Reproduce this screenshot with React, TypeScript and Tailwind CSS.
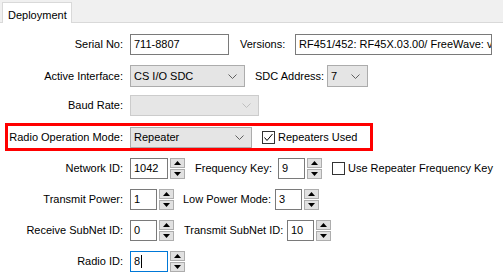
import React from 'react';

function TextBox({ value, w, focused = false }: { value: string; w: string; focused?: boolean }) {
  return (
    <div
      className={`${w} h-full bg-white border flex items-center pl-[3px] whitespace-nowrap overflow-hidden ${
        focused ? 'border-[#0078d7]' : 'border-[#7a7a7a]'
      }`}
    >
      <span>{value}</span>
      {focused && <span className="w-px h-[13px] bg-black ml-px"></span>}
    </div>
  );
}

function Spinner() {
  return (
    <div className="ml-[2px] flex flex-col gap-px h-full w-[15px]">
      <div className="flex-1 bg-[#e1e1e1] border border-[#adadad] flex items-center justify-center">
        <svg width="7" height="4" viewBox="0 0 7 4">
          <polygon points="3.5,0 7,4 0,4" fill="#000" />
        </svg>
      </div>
      <div className="flex-1 bg-[#e1e1e1] border border-[#adadad] flex items-center justify-center">
        <svg width="7" height="4" viewBox="0 0 7 4">
          <polygon points="0,0 7,0 3.5,4" fill="#000" />
        </svg>
      </div>
    </div>
  );
}

function Combo({ value, w, disabled = false }: { value: string; w: string; disabled?: boolean }) {
  return (
    <div
      className={`${w} h-full border flex items-center justify-between pl-[3px] pr-[7px] ${
        disabled ? 'bg-[#e6e6e6] border-[#cccccc]' : 'bg-[#e5e5e5] border-[#acacac]'
      }`}
    >
      <span>{value}</span>
      <svg width="9" height="5" viewBox="0 0 9 5">
        <polyline points="0.5,0.5 4.5,4.5 8.5,0.5" fill="none" stroke={disabled ? '#bfbfbf' : '#606060'} strokeWidth="1" />
      </svg>
    </div>
  );
}

function CheckBox({ checked }: { checked: boolean }) {
  return (
    <div className="w-[13px] h-[13px] border border-[#333333] bg-white flex items-center justify-center">
      {checked && (
        <svg width="11" height="11" viewBox="0 0 11 11">
          <polyline points="1.5,5.5 4,8.5 9.5,2" fill="none" stroke="#000" strokeWidth="1" />
        </svg>
      )}
    </div>
  );
}

function Label({ text }: { text: string }) {
  return <div className="w-[130px] pr-[7px] text-right whitespace-nowrap">{text}</div>;
}

export default function App() {
  return (
    <div className="w-[503px] h-[280px] bg-white overflow-hidden text-[11px] text-black font-['Liberation_Sans',Arial,sans-serif] flex flex-col">
      {/* Tab strip */}
      <div className="h-[23px] shrink-0 bg-[#f0f0f0] border-b border-[#d9d9d9] flex items-end">
        <div className="ml-[2px] w-[70px] h-[21px] -mb-px bg-white border border-b-0 border-[#d9d9d9] pl-[5px] pt-[4px]">
          Deployment
        </div>
      </div>

      {/* Serial No / Versions */}
      <div className="mt-[11px] h-[21px] flex items-center">
        <Label text="Serial No:" />
        <TextBox value="711-8807" w="w-[99px]" />
        <div className="w-[66px] pl-[11px]">Versions:</div>
        <TextBox value="RF451/452: RF45X.03.00/ FreeWave: v" w="w-[197px]" />
      </div>

      {/* Active Interface / SDC Address */}
      <div className="mt-[10px] h-[22px] flex items-center">
        <Label text="Active Interface:" />
        <Combo value="CS I/O SDC" w="w-[115px]" />
        <div className="w-[82px] pl-[10px]">SDC Address:</div>
        <Combo value="7" w="w-[41px]" />
      </div>

      {/* Baud Rate */}
      <div className="mt-[8px] h-[21px] flex items-center">
        <Label text="Baud Rate:" />
        <Combo value="" w="w-[129px]" disabled />
      </div>

      {/* Radio Operation Mode (highlighted) */}
      <div className="mt-[7px] ml-[5px] w-[368px] h-[28px] border-[3px] border-[#ff0000] flex items-center">
        <div className="w-[122px] pr-[7px] text-right whitespace-nowrap">Radio Operation Mode:</div>
        <div className="h-[21px] flex items-center">
          <Combo value="Repeater" w="w-[122px]" />
        </div>
        <div className="ml-[10px] flex items-center gap-[3px]">
          <CheckBox checked />
          <span>Repeaters Used</span>
        </div>
      </div>

      {/* Network ID / Frequency Key */}
      <div className="mt-[7px] h-[21px] flex items-center">
        <Label text="Network ID:" />
        <TextBox value="1042" w="w-[38px]" />
        <Spinner />
        <div className="w-[93px] pl-[10px] whitespace-nowrap">Frequency Key:</div>
        <TextBox value="9" w="w-[27px]" />
        <Spinner />
        <div className="ml-[10px] flex items-center gap-[3px]">
          <CheckBox checked={false} />
          <span>Use Repeater Frequency Key</span>
        </div>
      </div>

      {/* Transmit Power / Low Power Mode */}
      <div className="mt-[10px] h-[21px] flex items-center">
        <Label text="Transmit Power:" />
        <TextBox value="1" w="w-[27px]" />
        <Spinner />
        <div className="w-[101px] pl-[9px] whitespace-nowrap">Low Power Mode:</div>
        <TextBox value="3" w="w-[27px]" />
        <Spinner />
      </div>

      {/* Receive / Transmit SubNet ID */}
      <div className="mt-[10px] h-[21px] flex items-center">
        <Label text="Receive SubNet ID:" />
        <TextBox value="0" w="w-[27px]" />
        <Spinner />
        <div className="w-[113px] pl-[10px] whitespace-nowrap">Transmit SubNet ID:</div>
        <TextBox value="10" w="w-[27px]" />
        <Spinner />
      </div>

      {/* Radio ID */}
      <div className="mt-[10px] h-[21px] flex items-center">
        <Label text="Radio ID:" />
        <TextBox value="8" w="w-[38px]" focused />
        <Spinner />
      </div>
    </div>
  );
}
